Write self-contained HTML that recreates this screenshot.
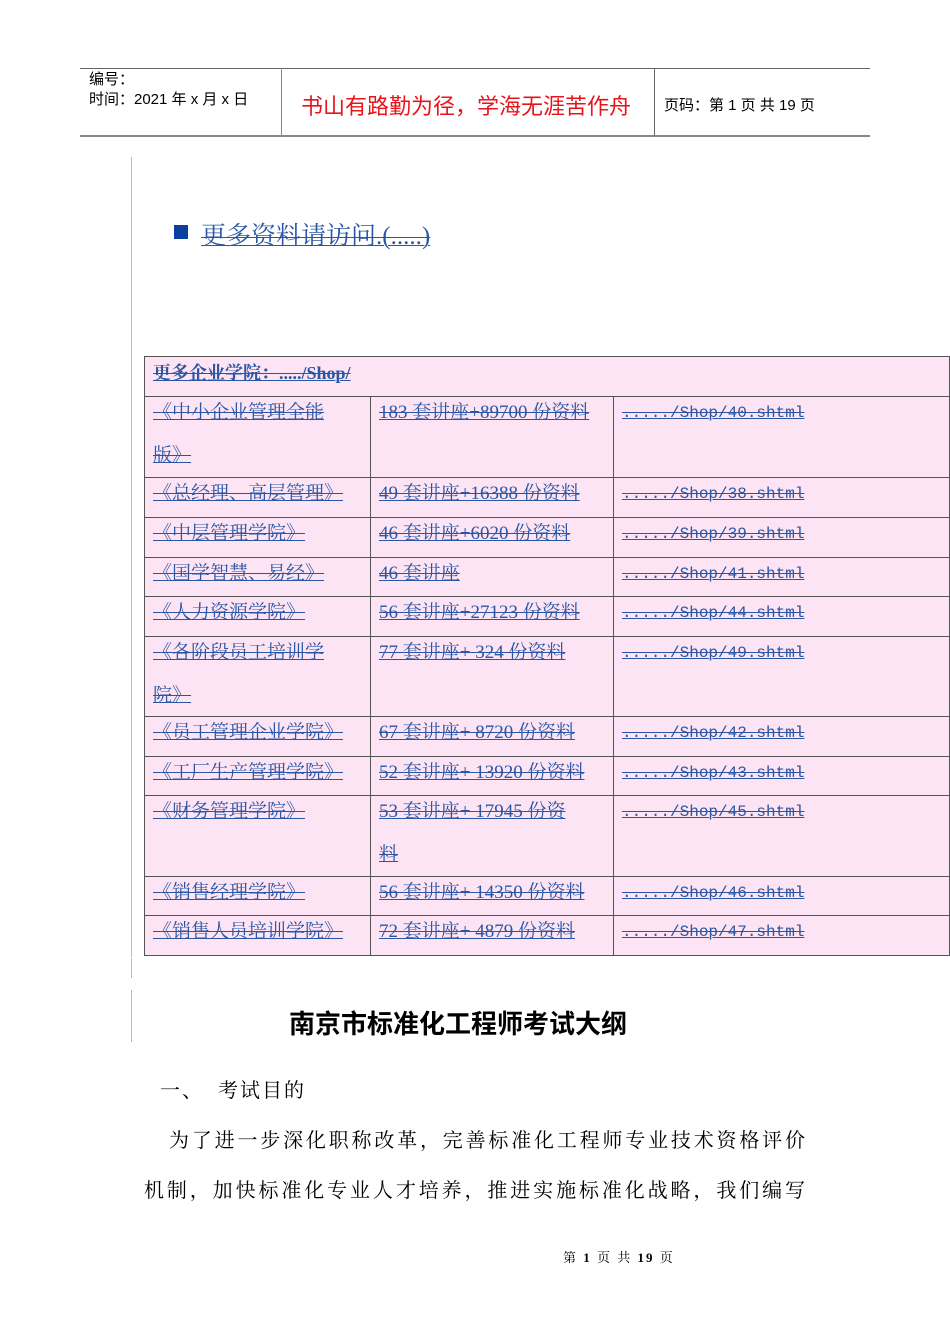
<!DOCTYPE html>
<html><head><meta charset="utf-8"><style>
body{margin:0;width:950px;height:1344px;background:#fff;position:relative;overflow:hidden;font-family:"Liberation Serif","Noto Serif CJK SC",serif}
.a{position:absolute;white-space:nowrap}
.hl{position:absolute;background:#666}
.lk{color:#2a56a4;text-decoration:underline line-through;text-decoration-thickness:1px;font-size:19px}
.m{font-family:'Liberation Mono',monospace;font-size:16px}
.vl{position:absolute;left:131px;width:1px;background:#bbb}
table{position:absolute;left:144px;top:356px;border-collapse:collapse;background:#fce4f4;table-layout:fixed;width:805px}
td{border:1.5px solid #555;vertical-align:top;padding:0 8px;box-sizing:border-box;overflow:hidden}
td div{line-height:42px;margin-top:-5px;white-space:nowrap;overflow:visible}
.j{position:absolute;font-size:20px;text-align:justify;text-align-last:justify;text-justify:inter-character;white-space:nowrap}
</style></head><body>
<div class="hl" style="left:80px;top:68px;width:790px;height:1px"></div>
<div class="hl" style="left:80px;top:135px;width:790px;height:2px;background:#888"></div>
<div class="hl" style="left:281px;top:68px;width:1px;height:68px;background:#888"></div>
<div class="hl" style="left:654px;top:68px;width:1px;height:68px"></div>
<div class="a" style="left:89px;top:70px;font:15px 'Liberation Sans','Noto Sans CJK SC',sans-serif;line-height:20px">编号：<br>时间：2021 年 x 月 x 日</div>
<div class="a" style="left:301px;top:89px;font:22px 'Liberation Sans','Noto Sans CJK SC',sans-serif;color:#e8141c">书山有路勤为径，学海无涯苦作舟</div>
<div class="a" style="left:664px;top:94px;font:15px 'Liberation Sans','Noto Sans CJK SC',sans-serif">页码：第 1 页  共 19 页</div>
<div class="vl" style="top:157px;height:800px"></div>
<div class="vl" style="top:958px;height:20px"></div>
<div class="vl" style="top:990px;height:52px"></div>
<div class="a" style="left:174px;top:225px;width:14px;height:14px;background:#0b3fa0"></div>
<div class="a lk" style="left:201px;top:216px;font-size:25px">更多资料请访问.(.....)</div>
<table>
<colgroup><col style="width:226px"><col style="width:243px"><col style="width:336px"></colgroup>
<tr style="height:40px"><td colspan="3"><div style="height:38px"><span class="lk" style="font-weight:bold;font-size:18px">更多企业学院：...../Shop/</span></div></td></tr>
<tr style="height:81px"><td><div style="height:79px"><span class="lk">《中小企业管理全能<br>版》</span></div></td><td><div style="height:79px"><span class="lk">183 套讲座+89700 份资料</span></div></td><td><div style="height:79px"><span class="lk m">...../Shop/40.shtml</span></div></td></tr>
<tr style="height:40px"><td><div style="height:38px"><span class="lk">《总经理、高层管理》</span></div></td><td><div style="height:38px"><span class="lk">49 套讲座+16388 份资料</span></div></td><td><div style="height:38px"><span class="lk m">...../Shop/38.shtml</span></div></td></tr>
<tr style="height:40px"><td><div style="height:38px"><span class="lk">《中层管理学院》</span></div></td><td><div style="height:38px"><span class="lk">46 套讲座+6020 份资料 </span></div></td><td><div style="height:38px"><span class="lk m">...../Shop/39.shtml</span></div></td></tr>
<tr style="height:39px"><td><div style="height:37px"><span class="lk">《国学智慧、易经》</span></div></td><td><div style="height:37px"><span class="lk">46 套讲座</span></div></td><td><div style="height:37px"><span class="lk m">...../Shop/41.shtml</span></div></td></tr>
<tr style="height:40px"><td><div style="height:38px"><span class="lk">《人力资源学院》</span></div></td><td><div style="height:38px"><span class="lk">56 套讲座+27123 份资料</span></div></td><td><div style="height:38px"><span class="lk m">...../Shop/44.shtml</span></div></td></tr>
<tr style="height:80px"><td><div style="height:78px"><span class="lk">《各阶段员工培训学<br>院》</span></div></td><td><div style="height:78px"><span class="lk">77 套讲座+ 324 份资料</span></div></td><td><div style="height:78px"><span class="lk m">...../Shop/49.shtml</span></div></td></tr>
<tr style="height:40px"><td><div style="height:38px"><span class="lk">《员工管理企业学院》</span></div></td><td><div style="height:38px"><span class="lk">67 套讲座+ 8720 份资料</span></div></td><td><div style="height:38px"><span class="lk m">...../Shop/42.shtml</span></div></td></tr>
<tr style="height:39px"><td><div style="height:37px"><span class="lk">《工厂生产管理学院》</span></div></td><td><div style="height:37px"><span class="lk">52 套讲座+ 13920 份资料</span></div></td><td><div style="height:37px"><span class="lk m">...../Shop/43.shtml</span></div></td></tr>
<tr style="height:81px"><td><div style="height:79px"><span class="lk">《财务管理学院》</span></div></td><td><div style="height:79px"><span class="lk">53 套讲座+ 17945 份资<br>料 </span></div></td><td><div style="height:79px"><span class="lk m">...../Shop/45.shtml</span></div></td></tr>
<tr style="height:39px"><td><div style="height:37px"><span class="lk">《销售经理学院》</span></div></td><td><div style="height:37px"><span class="lk">56 套讲座+ 14350 份资料</span></div></td><td><div style="height:37px"><span class="lk m">...../Shop/46.shtml</span></div></td></tr>
<tr style="height:40px"><td><div style="height:38px"><span class="lk">《销售人员培训学院》</span></div></td><td><div style="height:38px"><span class="lk">72 套讲座+ 4879 份资料</span></div></td><td><div style="height:38px"><span class="lk m">...../Shop/47.shtml</span></div></td></tr>
</table>
<div class="a" style="left:289px;top:1004px;font:bold 26px 'Liberation Sans','Noto Sans CJK SC',sans-serif">南京市标准化工程师考试大纲</div>
<div class="a" style="left:160px;top:1074px;font-size:20px;letter-spacing:2px">一、&nbsp; 考试目的</div>
<div class="j" style="left:169px;top:1124px;width:636px">为了进一步深化职称改革，完善标准化工程师专业技术资格评价</div>
<div class="j" style="left:144px;top:1174px;width:661px">机制，加快标准化专业人才培养，推进实施标准化战略，我们编写</div>
<div class="a" style="left:563px;top:1247px;font-size:13px;letter-spacing:2px">第 <b>1</b> 页 共 <b>19</b> 页</div>
</body></html>
